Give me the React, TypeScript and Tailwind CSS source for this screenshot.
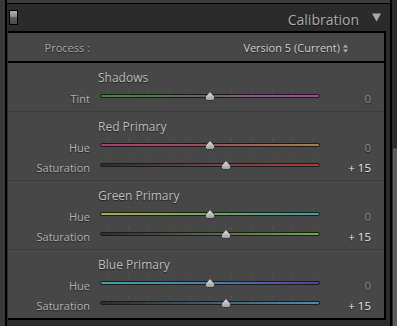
import React from 'react';

type Row = { label: string; value: number; track: string };
type Section = { title: string; rows: Row[] };

const SECTIONS: Section[] = [
  {
    title: 'Shadows',
    rows: [
      { label: 'Tint', value: 0, track: 'bg-[linear-gradient(to_right,#3c8a3a,#5d6a5b_45%,#7a5c7c_60%,#b23fb6)]' },
    ],
  },
  {
    title: 'Red Primary',
    rows: [
      { label: 'Hue', value: 0, track: 'bg-[linear-gradient(to_right,#a83c74,#9c5058_50%,#a2804c)]' },
      { label: 'Saturation', value: 15, track: 'bg-[linear-gradient(to_right,#2e2e2e,#6a4646_50%,#ac3c3c)]' },
    ],
  },
  {
    title: 'Green Primary',
    rows: [
      { label: 'Hue', value: 0, track: 'bg-[linear-gradient(to_right,#a4b23e,#6caa58_50%,#3aa2a6)]' },
      { label: 'Saturation', value: 15, track: 'bg-[linear-gradient(to_right,#2e2e2e,#536a46_50%,#6aae40)]' },
    ],
  },
  {
    title: 'Blue Primary',
    rows: [
      { label: 'Hue', value: 0, track: 'bg-[linear-gradient(to_right,#3ca4a0,#4a80aa_50%,#5c3ca6)]' },
      { label: 'Saturation', value: 15, track: 'bg-[linear-gradient(to_right,#2e2e2e,#465c6a_50%,#4a8eb2)]' },
    ],
  },
];

const TICKS = Array.from({ length: 11 }, (_, i) => 7 + i * 20.6);

function Thumb() {
  return (
    <svg width="10" height="10" viewBox="0 0 10 10">
      <defs>
        <linearGradient id="thumb" x1="0" y1="0" x2="0" y2="1">
          <stop offset="0" stopColor="#e2e2e2" />
          <stop offset="1" stopColor="#9c9c9c" />
        </linearGradient>
      </defs>
      <path d="M5 0.5 L9.5 5.5 L9.5 7.5 Q9.5 9.5 7.5 9.5 L2.5 9.5 Q0.5 9.5 0.5 7.5 L0.5 5.5 Z" fill="url(#thumb)" stroke="#2a2a2a" strokeWidth="0.8" />
    </svg>
  );
}

function Slider({ value, track }: { value: number; track: string }) {
  const x = 110 + value * (16 / 15);
  return (
    <div className="relative w-[220px] h-[20px] shrink-0">
      {TICKS.map((t, i) => (
        <div key={i} className="absolute top-[3px] h-[3px] w-px bg-[#525252]" style={{ left: t }} />
      ))}
      <div className={`absolute left-0 right-0 top-[8px] h-[4px] rounded-full border border-[#1c1c1c] ${track}`} />
      <div className="absolute top-[5px]" style={{ left: x - 5 }}>
        <Thumb />
      </div>
    </div>
  );
}

const shadow = '[text-shadow:0_1px_1px_rgba(0,0,0,0.55)]';

export default function App() {
  return (
    <div className={`w-[397px] h-[326px] flex bg-[#2b2b2b] overflow-hidden font-['Open_Sans',sans-serif] ${shadow}`}>
      <div className="w-[5px] bg-[#393939]" />
      <div className="w-[2px] bg-black" />

      <div className="flex-1 flex flex-col">
        <div className="h-[3px] bg-[#3d3d3d]" />
        <div className="h-px bg-black" />

        {/* Panel header */}
        <div className="h-[27px] flex items-center pr-[9px]">
          <div className="ml-[2px] w-[9px] h-[15px] border border-black bg-[linear-gradient(to_bottom,#b0b0b0,#8a8a8a_45%,#5c5c5c_50%,#4a4a4a)]" />
          <span className="ml-auto pt-[4px] text-[14px] text-[#adadad] leading-none">Calibration</span>
          <svg className="ml-[13px]" width="9" height="9" viewBox="0 0 9 9">
            <path d="M0 0.5 H9 L4.5 8.5 Z" fill="#a9a9a9" />
          </svg>
        </div>

        {/* Panel body */}
        <div className="ml-px mr-[4px] bg-[#474747] border-t-2 border-r-2 border-b-2 border-black">
          <div className="h-[30px] flex items-center pt-[2px] border-b-2 border-black">
            <span className="w-[82px] text-right text-[11px] text-[#a9a9a9]">Process :</span>
            <div className="ml-auto pr-[36px] flex items-center gap-[3px]">
              <span className="text-[11px] text-[#d2d2d2]">Version 5 (Current)</span>
              <svg width="5" height="9" viewBox="0 0 5 9">
                <path d="M2.5 0.5 L5 3.5 H0 Z M2.5 8.5 L5 5.5 H0 Z" fill="#b5b5b5" />
              </svg>
            </div>
          </div>

          {SECTIONS.map((s, si) => (
            <div
              key={s.title}
              className={`pt-[5px] pb-[5px] ${si < SECTIONS.length - 1 ? 'border-b border-[#3b3b3b]' : ''}`}
            >
              <div className="h-[16px] pt-[2px] leading-[16px] pl-[90px] text-[12px] text-[#bdbdbd]">{s.title}</div>
              <div className="mt-[2px] flex flex-col">
                {s.rows.map((r) => (
                  <div key={r.label} className="h-[20px] flex items-center">
                    <span className="w-[82px] pt-[6px] text-right text-[11px] text-[#b4b4b4]">{r.label}</span>
                    <div className="ml-[10px]">
                      <Slider value={r.value} track={r.track} />
                    </div>
                    <span
                      className={`w-[51px] pt-[6px] text-right text-[11.5px] ${r.value === 0 ? 'text-[#8e8e8e]' : 'text-[#e8e8e8]'}`}
                    >
                      {r.value === 0 ? '0' : `+ ${r.value}`}
                    </span>
                  </div>
                ))}
              </div>
            </div>
          ))}
        </div>
      </div>

      <div className="w-[2px] bg-black" />
      <div className="w-[5px] flex flex-col pl-px">
        <div className="h-[148px]" />
        <div className="flex-1 rounded-t-[2px] bg-[#5c5c5c]" />
      </div>
    </div>
  );
}
